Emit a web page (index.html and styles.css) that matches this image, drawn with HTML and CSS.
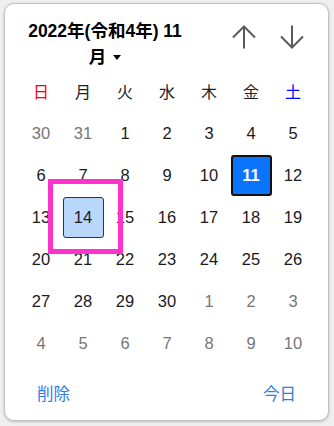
FILE: index.html
```html
<!DOCTYPE html>
<html lang="ja">
<head>
<meta charset="utf-8">
<link rel="stylesheet" href="styles.css">
</head>
<body>
<div class="popup">
  <div class="header">
    <div class="title">2022年(令和4年) 11 月<span class="caret"></span></div>
    <div class="nav">
      <button class="navbtn" aria-label="前の月">
        <svg width="24" height="24" viewBox="0 0 24 24"><path d="M12 23.5V1.5M1 12.5L12 1.5L23 12.5" fill="none" stroke="#5a5a5a" stroke-width="2"/></svg>
      </button>
      <button class="navbtn" aria-label="次の月">
        <svg width="24" height="24" viewBox="0 0 24 24"><path d="M12 0.5V22.5M1 11.5L12 22.5L23 11.5" fill="none" stroke="#5a5a5a" stroke-width="2"/></svg>
      </button>
    </div>
  </div>
  <div class="grid">
    <div class="wd sun">日</div><div class="wd">月</div><div class="wd">火</div><div class="wd">水</div><div class="wd">木</div><div class="wd">金</div><div class="wd sat">土</div>
    <div class="d other">30</div><div class="d other">31</div><div class="d">1</div><div class="d">2</div><div class="d">3</div><div class="d">4</div><div class="d">5</div>
    <div class="d">6</div><div class="d">7</div><div class="d">8</div><div class="d">9</div><div class="d">10</div><div class="d"><span class="sel">11</span></div><div class="d">12</div>
    <div class="d">13</div><div class="d"><span class="hover">14</span></div><div class="d">15</div><div class="d">16</div><div class="d">17</div><div class="d">18</div><div class="d">19</div>
    <div class="d">20</div><div class="d">21</div><div class="d">22</div><div class="d">23</div><div class="d">24</div><div class="d">25</div><div class="d">26</div>
    <div class="d">27</div><div class="d">28</div><div class="d">29</div><div class="d">30</div><div class="d other">1</div><div class="d other">2</div><div class="d other">3</div>
    <div class="d other">4</div><div class="d other">5</div><div class="d other">6</div><div class="d other">7</div><div class="d other">8</div><div class="d other">9</div><div class="d other">10</div>
  </div>
  <div class="footer">
    <span class="link">削除</span>
    <span class="link">今日</span>
  </div>
</div>
<div class="mark"></div>
</body>
</html>
```

FILE: styles.css
```css
html, body {
  margin: 0;
  padding: 0;
}
body {
  width: 334px;
  height: 426px;
  background: #efefef;
  font-family: "Liberation Sans", "Noto Sans CJK JP", sans-serif;
  color: #1a1a1a;
  position: relative;
  overflow: hidden;
}
.popup {
  position: relative;
  margin: 3px 0 0 4px;
  width: 325px;
  height: 418px;
  box-sizing: border-box;
  background: #fff;
  border: 1px solid #c2c2c2;
  border-radius: 10px;
  box-shadow: 0 1px 3px rgba(0, 0, 0, 0.22);
  padding: 14px 14px 0 15px;
}
.header {
  display: flex;
  height: 52px;
}
.title {
  width: 170px;
  text-align: center;
  font-weight: bold;
  font-size: 17.5px;
  line-height: 26px;
  color: #000;
}
.caret {
  display: inline-block;
  width: 0;
  height: 0;
  margin-left: 7px;
  vertical-align: 3px;
  border-left: 4.5px solid transparent;
  border-right: 4.5px solid transparent;
  border-top: 5px solid #000;
}
.nav {
  margin-left: auto;
  margin-right: 2px;
  display: flex;
  gap: 8px;
  align-items: flex-start;
}
.navbtn {
  width: 40px;
  height: 24px;
  margin-top: 7px;
  padding: 0;
  border: 0;
  background: none;
  display: flex;
  justify-content: center;
}
.navbtn svg {
  display: block;
}
.grid {
  display: grid;
  grid-template-columns: repeat(7, 42px);
  grid-auto-rows: 42px;
}
.wd {
  display: flex;
  align-items: center;
  justify-content: center;
  font-size: 16px;
  color: #222;
}
.wd.sun { color: #ff0000; }
.wd.sat { color: #0000ff; }
.d {
  display: flex;
  align-items: center;
  justify-content: center;
  font-size: 16.5px;
  color: #1a1a1a;
}
.d.other { color: #767676; }
.sel, .hover {
  box-sizing: border-box;
  width: 41px;
  height: 41px;
  display: flex;
  align-items: center;
  justify-content: center;
  border-radius: 3px;
}
.sel {
  background: #0a75fc;
  border: 2.5px solid #111;
  color: #fff;
  font-weight: bold;
}
.hover {
  background: #b9d6fb;
  border: 1.5px solid #333;
}
.footer {
  display: flex;
  justify-content: space-between;
  padding: 18px 18px 0 17px;
  font-size: 16.5px;
  line-height: 24px;
}
.link {
  color: #2f7de0;
}
.mark {
  position: absolute;
  left: 48px;
  top: 179px;
  width: 75px;
  height: 75px;
  box-sizing: border-box;
  border: 5px solid #ff33cc;
}
```
